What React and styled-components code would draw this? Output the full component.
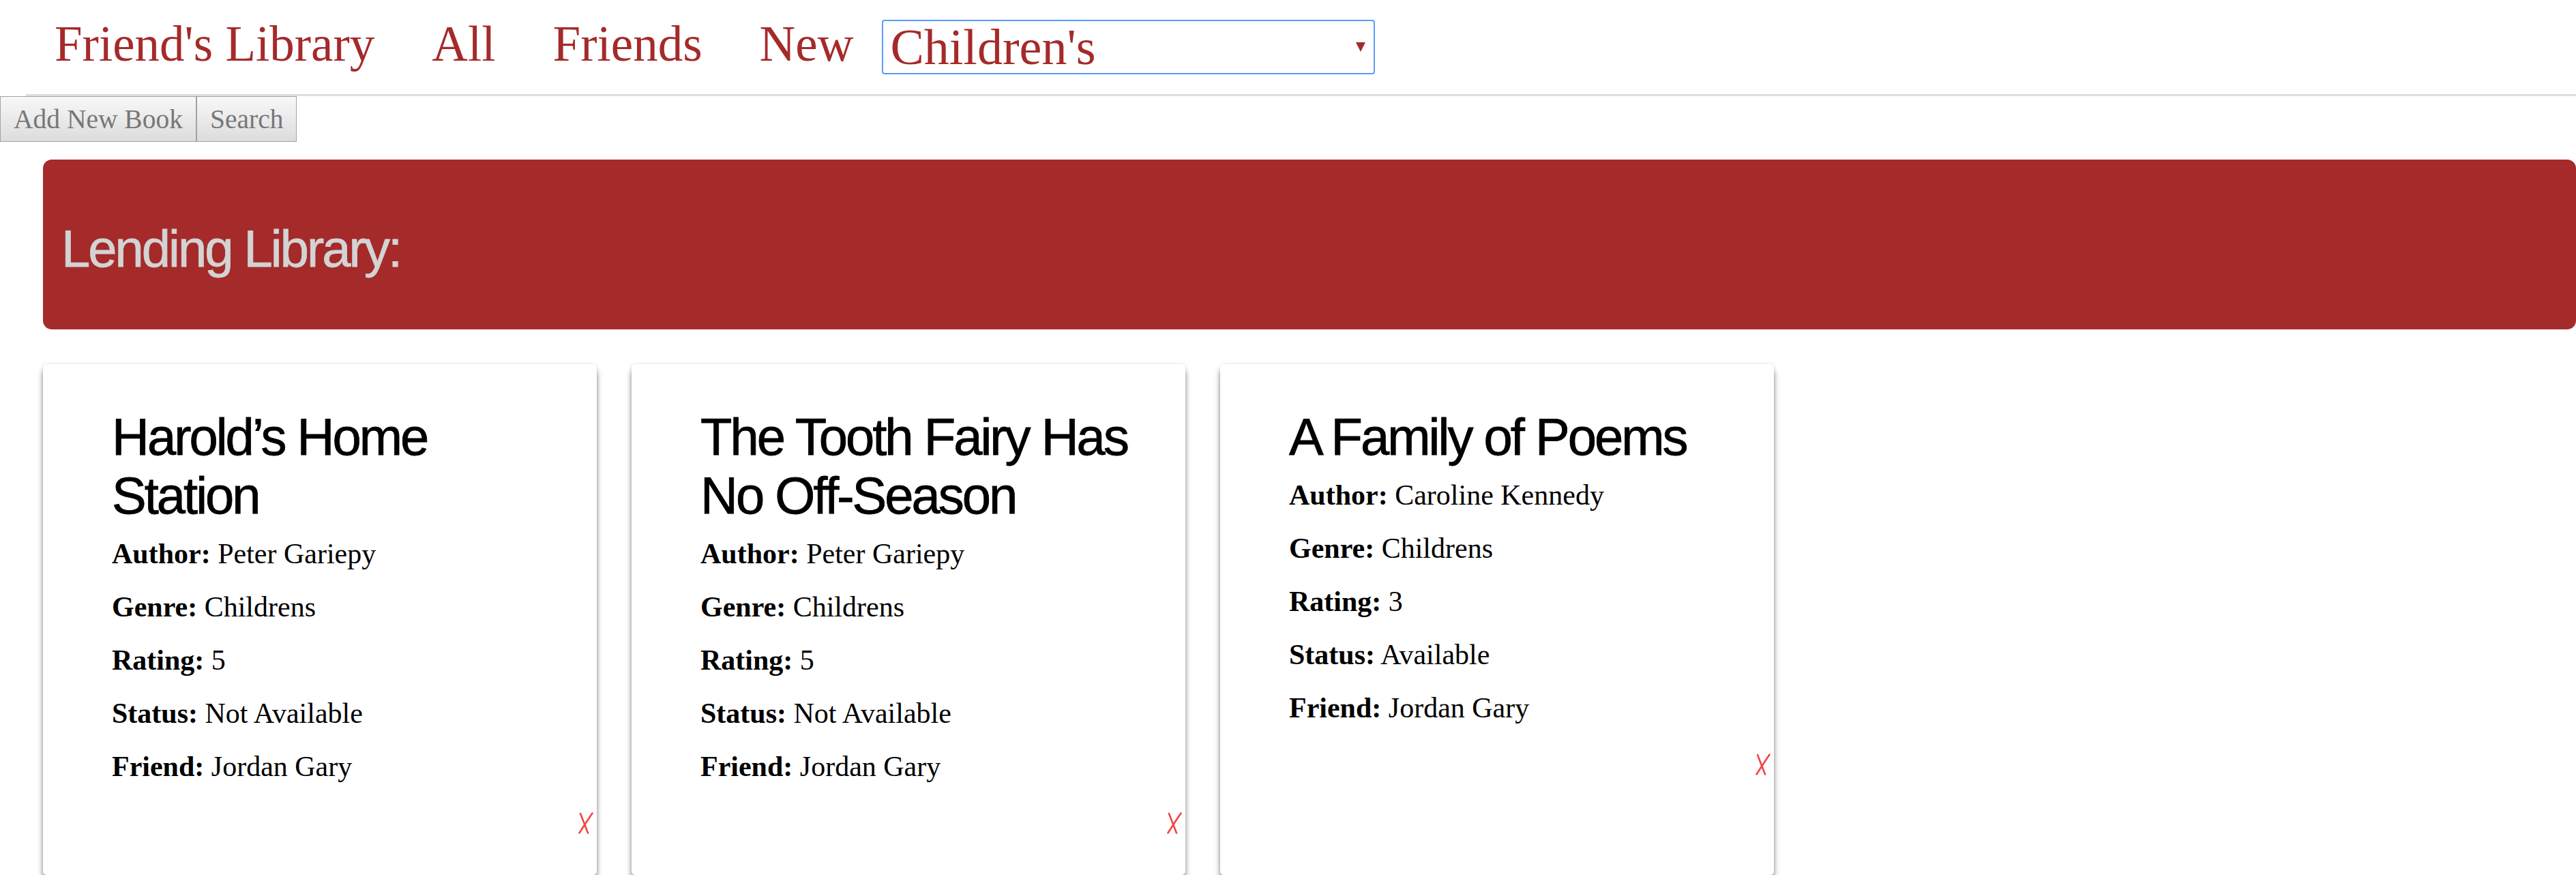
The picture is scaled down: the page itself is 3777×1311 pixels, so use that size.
import React from 'react';
import styled, { createGlobalStyle } from 'styled-components';

const BROWN = '#a52a2a';
const HEADING_FONT = '"Liberation Sans", Arial, sans-serif';

const GlobalStyle = createGlobalStyle`
    body {
        margin: 0;
        background: #ffffff;
        font-family: "Liberation Serif", serif;
        color: #000000;
    }
`;

const Nav = styled.nav`
    display: flex;
    align-items: flex-start;
    box-sizing: border-box;
    height: 141px;
    margin-left: 38px;
    border-bottom: 3px solid #dddddd;
`;

const NavLink = styled.a`
    margin-top: 22px;
    padding: 0 42px;
    font-size: 73px;
    line-height: 85px;
    color: ${BROWN};
    text-decoration: none;
    white-space: nowrap;
    cursor: pointer;
`;

const SelectBox = styled.div`
    display: flex;
    align-items: center;
    justify-content: space-between;
    box-sizing: border-box;
    width: 723px;
    height: 80px;
    margin-top: 29px;
    padding: 0 12px 0 10px;
    border: 2px solid #5b9cfb;
    border-radius: 4px;
    cursor: pointer;
`;

const SelectValue = styled.span`
    font-size: 74px;
    line-height: 73px;
    color: ${BROWN};
`;

const Caret = styled.span`
    width: 0;
    height: 0;
    border-left: 7.5px solid transparent;
    border-right: 7.5px solid transparent;
    border-top: 14px solid ${BROWN};
`;

const Toolbar = styled.div`
    display: flex;
`;

const ToolButton = styled.button`
    box-sizing: border-box;
    height: 67px;
    padding: 0 19px;
    border: 1px solid #a3a3a3;
    border-radius: 0;
    background: linear-gradient(#f8f8f8, #dcdcdc);
    font-family: "Liberation Serif", serif;
    font-size: 39.5px;
    color: #777777;
    cursor: pointer;
`;

const Banner = styled.header`
    box-sizing: border-box;
    height: 249px;
    margin: 26px 0 0 63px;
    padding: 88px 27px 0;
    border-radius: 13px;
    background: ${BROWN};
`;

const BannerTitle = styled.h1`
    margin: 0;
    font-family: ${HEADING_FONT};
    font-weight: normal;
    font-size: 76px;
    line-height: 86px;
    letter-spacing: -3px;
    color: #d3d3d3;
    -webkit-text-stroke: 0.8px #d3d3d3;
`;

const CardList = styled.div`
    display: flex;
    gap: 51px;
    margin-top: 51px;
    padding-left: 63px;
`;

const Card = styled.article`
    box-sizing: border-box;
    width: 812px;
    height: 749px;
    padding: 64px 5px 0 101px;
    border-radius: 5px;
    background: #ffffff;
    box-shadow: 0 9px 9px rgba(0, 0, 0, 0.45), 0 0 5px rgba(0, 0, 0, 0.12);
`;

const CardTitle = styled.h2`
    max-width: 660px;
    margin: 0 0 3px;
    font-family: ${HEADING_FONT};
    font-weight: normal;
    font-size: 76px;
    line-height: 86px;
    letter-spacing: -3px;
    -webkit-text-stroke: 0.8px #000000;
`;

const Field = styled.div`
    font-size: 42px;
    line-height: 78px;
    white-space: nowrap;

    b {
        font-weight: bold;
    }
`;

const DeleteRow = styled.div`
    display: flex;
    justify-content: flex-end;
    margin-top: 28px;
`;

const DeleteButton = styled.button`
    padding: 0;
    border: none;
    background: none;
    cursor: pointer;

    svg {
        display: block;
    }
`;

const books = [
    { title: 'Harold’s Home Station', author: 'Peter Gariepy', genre: 'Childrens', rating: 5, status: 'Not Available', friend: 'Jordan Gary' },
    { title: 'The Tooth Fairy Has No Off-Season', author: 'Peter Gariepy', genre: 'Childrens', rating: 5, status: 'Not Available', friend: 'Jordan Gary' },
    { title: 'A Family of Poems', author: 'Caroline Kennedy', genre: 'Childrens', rating: 3, status: 'Available', friend: 'Jordan Gary' },
];

const DeleteIcon = () => (
    <svg width="22" height="32" viewBox="0 0 22 32">
        <path d="M3 2 L14 30.5" stroke="#f04646" strokeWidth="2.6" strokeLinecap="round" fill="none" />
        <path d="M20.5 1.5 Q12 14 1.5 30.5" stroke="#f04646" strokeWidth="2.6" strokeLinecap="round" fill="none" />
    </svg>
);

const BookCard = ({ book }) => (
    <Card>
        <CardTitle>{book.title}</CardTitle>
        <Field><b>Author:</b> {book.author}</Field>
        <Field><b>Genre:</b> {book.genre}</Field>
        <Field><b>Rating:</b> {book.rating}</Field>
        <Field><b>Status:</b> {book.status}</Field>
        <Field><b>Friend:</b> {book.friend}</Field>
        <DeleteRow>
            <DeleteButton aria-label="Delete book">
                <DeleteIcon />
            </DeleteButton>
        </DeleteRow>
    </Card>
);

const App = () => {
    return (
        <>
            <GlobalStyle />
            <Nav>
                <NavLink>Friend's Library</NavLink>
                <NavLink>All</NavLink>
                <NavLink>Friends</NavLink>
                <NavLink>New</NavLink>
                <SelectBox>
                    <SelectValue>Children's</SelectValue>
                    <Caret />
                </SelectBox>
            </Nav>
            <Toolbar>
                <ToolButton>Add New Book</ToolButton>
                <ToolButton>Search</ToolButton>
            </Toolbar>
            <Banner>
                <BannerTitle>Lending Library:</BannerTitle>
            </Banner>
            <CardList>
                {books.map((book) => (
                    <BookCard key={book.title} book={book} />
                ))}
            </CardList>
        </>
    );
};

export default App;
